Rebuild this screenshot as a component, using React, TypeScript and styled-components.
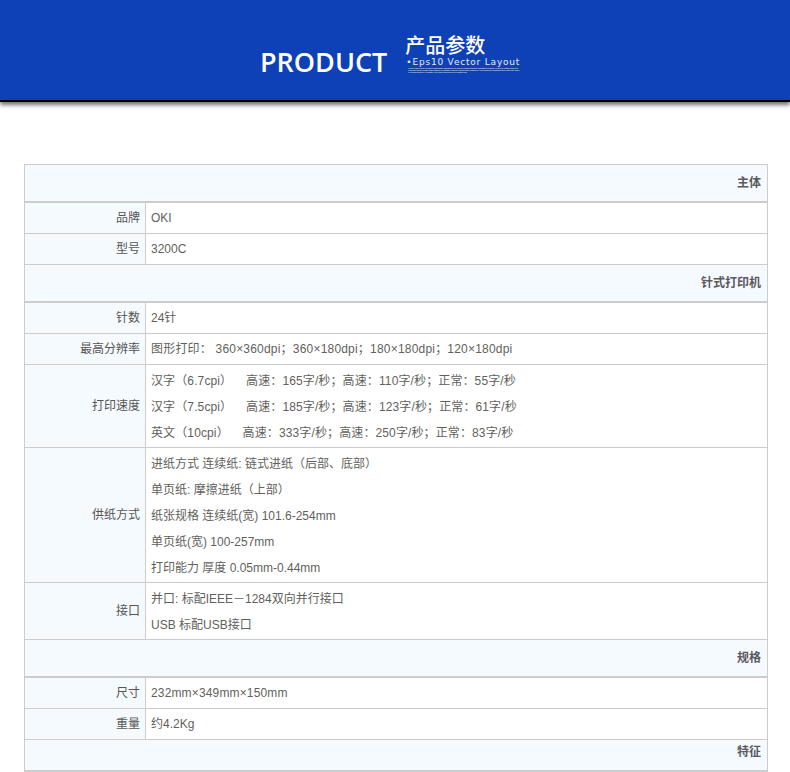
import { createGlobalStyle } from 'styled-components';
import styled from 'styled-components';

const GlobalStyle = createGlobalStyle`
  body {
    margin: 0;
    background: #fff;
    font-family: "Liberation Sans", "Noto Sans CJK SC", sans-serif;
  }
`;

const Banner = styled.header`
  height: 100px;
  background: #0e41b5;
  box-shadow: 0 2px 0 #000, 0 5px 4px rgba(0, 0, 0, 0.55);
  padding: 33px 0 0 260px;
  box-sizing: border-box;
  display: flex;
  gap: 18px;
`;

const Product = styled.h1`
  margin: 11px 0 0;
  font: 600 27px/36px "Open Sans", sans-serif;
  color: #fff;
`;

const TitleBlock = styled.div`
  display: flex;
  flex-direction: column;
  width: 118px;
`;

const CnTitle = styled.div`
  font: 500 20px/24px "Noto Sans CJK SC", sans-serif;
  color: #fff;
`;

const EpsLine = styled.div`
  margin: 1px 0 0 1px;
  font: 400 9px/9px "DejaVu Sans", sans-serif;
  color: #e6ebf9;
  letter-spacing: 0.8px;
  white-space: nowrap;
`;

const Fine = styled.div`
  font: 2px/2px "Liberation Sans", sans-serif;
  color: #fff;
  width: 113px;
  margin-left: 3px;
  height: 6px;
  overflow: hidden;
`;

const Wrap = styled.main`
  padding: 64px 22px 0 24px;
`;

const Table = styled.table`
  width: 744px;
  table-layout: fixed;
  border-collapse: separate;
  border-spacing: 0;
  border: 1px solid #ccc;
  border-bottom: 0;
  font-size: 12px;
  line-height: 26px;
`;

const LabelCol = styled.col`
  width: 121px;
`;

const SectionCell = styled.th<{ $short?: boolean }>`
  height: ${(p) => (p.$short ? 24 : 35)}px;
  padding: ${(p) => (p.$short ? '0 6px 6px 0' : '1px 6px 0 0')};
  box-sizing: content-box;
  line-height: ${(p) => (p.$short ? 24 : 35)}px;
  text-align: right;
  font-weight: 700;
  color: #5c5860;
  background: #f5fafe;
  border-bottom: 2px solid #ccc;
`;

const Label = styled.th`
  padding: 2px 5px 2px 0;
  text-align: right;
  font-weight: 400;
  color: #555;
  background: #f5fafe;
  border-right: 1px solid #ccc;
  border-bottom: 1px solid #ccc;
`;

const Value = styled.td<{ $multi: boolean }>`
  padding: ${(p) => (p.$multi ? '3px 5px 1px' : '2px 5px')};
  color: #625f5c;
  border-bottom: 1px solid #ccc;
`;

const Line = styled.div<{ $track?: number }>`
  white-space: pre;
  letter-spacing: ${(p) => p.$track ?? 0}px;
`;

type Row =
  | { section: string; short?: boolean }
  | { label: string; lines: string[]; track?: number };

const rows: Row[] = [
  { section: '主体' },
  { label: '品牌', lines: ['OKI'] },
  { label: '型号', lines: ['3200C'] },
  { section: '针式打印机' },
  { label: '针数', lines: ['24针'] },
  {
    label: '最高分辨率',
    lines: ['图形打印： 360×360dpi；360×180dpi；180×180dpi；120×180dpi'],
    track: 0.2,
  },
  {
    label: '打印速度',
    lines: [
      '汉字（6.7cpi）    高速：165字/秒；高速：110字/秒；正常：55字/秒',
      '汉字（7.5cpi）    高速：185字/秒；高速：123字/秒；正常：61字/秒',
      '英文（10cpi）    高速：333字/秒；高速：250字/秒；正常：83字/秒',
    ],
    track: 0.12,
  },
  {
    label: '供纸方式',
    lines: [
      '进纸方式 连续纸: 链式进纸（后部、底部）',
      '单页纸: 摩擦进纸（上部）',
      '纸张规格 连续纸(宽) 101.6-254mm',
      '单页纸(宽) 100-257mm',
      '打印能力 厚度 0.05mm-0.44mm',
    ],
  },
  { label: '接口', lines: ['并口: 标配IEEE－1284双向并行接口', 'USB 标配USB接口'] },
  { section: '规格' },
  { label: '尺寸', lines: ['232mm×349mm×150mm'], track: 0.15 },
  { label: '重量', lines: ['约4.2Kg'] },
  { section: '特征', short: true },
];

export default function App() {
  return (
    <>
      <GlobalStyle />
      <Banner>
        <Product>PRODUCT</Product>
        <TitleBlock>
          <CnTitle>产品参数</CnTitle>
          <EpsLine>•Eps10 Vector Layout</EpsLine>
          <Fine>
            Lorem ipsum dolor sit amet consectetur adipiscing elit sed do eiusmod tempor incididunt ut labore et dolore
            magna aliqua ut enim ad minim veniam quis nostrud exercitation ullamco laboris nisi ut aliquip ex ea commodo
            consequat duis aute irure dolor in reprehenderit in voluptate velit esse cillum dolore eu fugiat nulla
          </Fine>
        </TitleBlock>
      </Banner>
      <Wrap>
        <Table>
          <colgroup>
            <LabelCol />
            <col />
          </colgroup>
          <tbody>
            {rows.map((r, i) =>
              'section' in r ? (
                <tr key={i}>
                  <SectionCell colSpan={2} $short={r.short}>
                    {r.section}
                  </SectionCell>
                </tr>
              ) : (
                <tr key={i}>
                  <Label>{r.label}</Label>
                  <Value $multi={r.lines.length > 1}>
                    {r.lines.map((l, j) => (
                      <Line key={j} $track={r.track}>
                        {l}
                      </Line>
                    ))}
                  </Value>
                </tr>
              ),
            )}
          </tbody>
        </Table>
      </Wrap>
    </>
  );
}
